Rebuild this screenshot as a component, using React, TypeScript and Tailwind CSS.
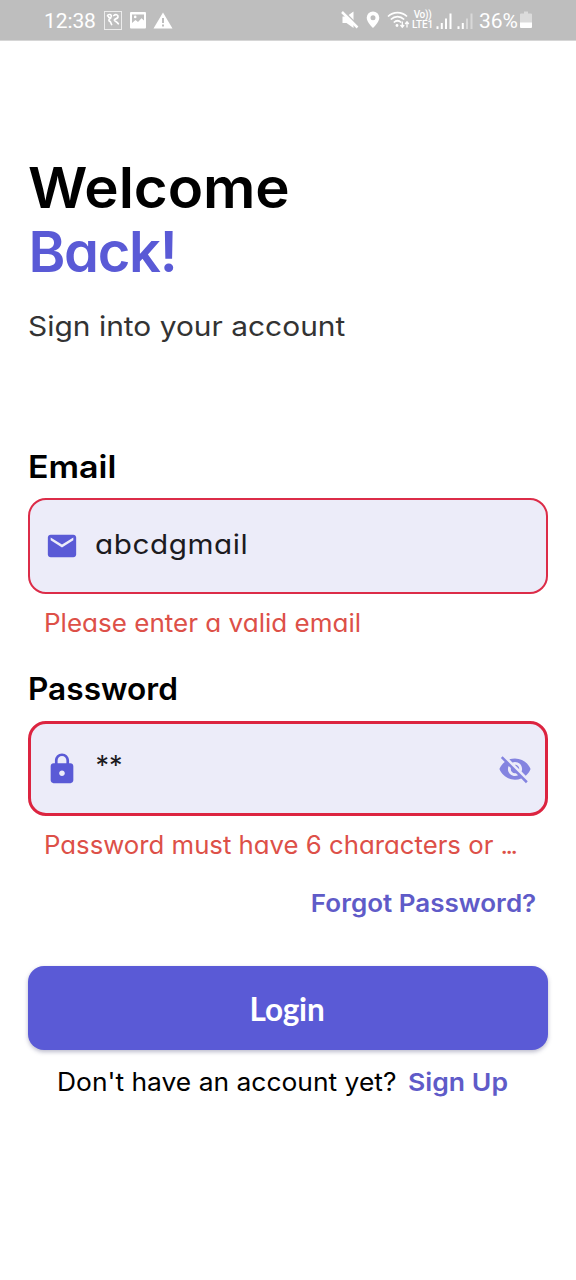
import type { ReactNode } from "react";

function StatusBar() {
  return (
    <header className="flex h-[41px] items-center border-b border-[#d6d6d6] bg-[#bebebe] pl-[44px] pr-[44px] font-['Roboto',sans-serif] text-[21px] leading-10 text-white">
      <span className="w-[60px] pt-[2px] tracking-[-0.100px]">12:38</span>
      <span className="flex h-[19px] w-[18px] items-center justify-center border border-white/70">
        <svg width="14" height="14" viewBox="0 0 14 14" fill="none" stroke="white" strokeWidth="1.700" strokeLinecap="round">
          <path d="M1.500 2.800C2.200.8 5.600 1.200 5.300 3.400 5 5.200 2.400 5 2.400 3.600M4.600 5.200C2.400 6.200 2.300 8 4.300 8.600L5.600 11.500M7.800 2.500C9.600.8 12.400 1.800 12 4 11.600 6 8 5.800 8.400 7.200 8.800 8.400 10.500 7.800 12.300 10.800" />
        </svg>
      </span>
      <svg className="ml-[8px]" width="16" height="17" viewBox="0 0 16 17">
        <rect width="16" height="16.500" rx="1" fill="white" />
        <path d="M2 2.500h12v6L11.500 6.300 8 10 5.500 8 2 11z" fill="#bebebe" />
        <circle cx="5.200" cy="4.900" r="1.300" fill="white" />
      </svg>
      <svg className="ml-[7px]" width="20" height="17" viewBox="0 0 20 17">
        <path d="M10 .5 19.500 16.500H.5z" fill="white" />
        <path d="M9 6h2v5H9zM9 12.500h2v2H9z" fill="#bebebe" />
      </svg>

      <svg className="ml-auto" width="18" height="18" viewBox="0 0 18 18">
        <path d="M1.500 5.500h4l7-5V17l-7-5h-4z" fill="white" />
        <path d="M2.500 0 18 15.500" stroke="#bebebe" strokeWidth="1.600" />
        <path d="M1 1 16.500 16.500" stroke="white" strokeWidth="2.500" />
      </svg>
      <svg className="ml-[7px]" width="14" height="18" viewBox="0 0 14 18">
        <path
          fillRule="evenodd"
          d="M7 .5A6.300 6.300 0 0 0 .7 6.800C.7 11.200 7 17 7 17s6.300-5.800 6.300-10.200A6.300 6.300 0 0 0 7 .5zM7 4.200a2.500 2.500 0 1 1 0 5 2.500 2.500 0 0 1 0-5z"
          fill="white"
        />
      </svg>
      <svg className="ml-[7px]" width="23" height="18" viewBox="0 0 23 18" fill="none" stroke="white" strokeWidth="1.700">
        <path d="M1 5.500C6.500.2 14.500.2 20 5.500M3.800 8.500c4-3.800 9.400-3.800 13.400 0M6.800 11.500c2.200-2.100 5.200-2.100 7.400 0" />
        <circle cx="10" cy="14.500" r="1.400" fill="white" stroke="none" />
        <path d="M15.300 10.500v5.500M13.500 14l1.800 2.300 1.800-2.300M20 16.500v-5.500M18.200 13 20 10.700l1.800 2.300" strokeWidth="1.300" />
      </svg>
      <span className="ml-[2px] flex w-[21px] flex-col items-center text-[10px] font-medium leading-[10px]">
        <span className="tracking-[-0.300px]">Vo))</span>
        <span className="tracking-[-0.200px]">LTE1</span>
      </span>
      <svg className="ml-[3px]" width="17" height="17" viewBox="0 0 17 17" fill="white">
        <path d="M.5 14.300h2V17h-2zM4.800 11h2v6h-2zM9 6.500h2V17H9zM13.500 1.500h2V17h-2z" />
      </svg>
      <svg className="ml-[4px]" width="17" height="17" viewBox="0 0 17 17" fill="white">
        <path d="M.5 14.300h2V17h-2zM4.800 11h2v6h-2z" />
        <path d="M9 6.500h2V17H9zM13.500 1.500h2V17h-2z" opacity="0.4" />
      </svg>
      <span className="ml-[5px] pt-[2px]">36%</span>
      <svg className="ml-[2px]" width="12" height="18" viewBox="0 0 12 18" fill="white">
        <path d="M4 .5h4v2h3q1 0 1 1V12H0V3.500q0-1 1-1h3z" opacity="0.45" />
        <path d="M0 11.500h12V16q0 1-1 1H1q-1 0-1-1z" />
      </svg>
    </header>
  );
}

function MailIcon() {
  return (
    <svg width="34" height="34" viewBox="0 0 24 24" fill="#5a5ad6">
      <path d="M20 4H4c-1.100 0-1.990.9-1.990 2L2 18c0 1.100.9 2 2 2h16c1.100 0 2-.9 2-2V6c0-1.100-.9-2-2-2zm0 4l-8 5-8-5V6l8 5 8-5v2z" />
    </svg>
  );
}

function LockIcon() {
  return (
    <svg width="34" height="34" viewBox="0 0 24 24" fill="#5a5ad6">
      <path d="M18 8h-1V6c0-2.760-2.240-5-5-5S7 3.240 7 6v2H6c-1.100 0-2 .9-2 2v10c0 1.100.9 2 2 2h12c1.100 0 2-.9 2-2V10c0-1.100-.9-2-2-2zm-6 9c-1.100 0-2-.9-2-2s.9-2 2-2 2 .9 2 2-.9 2-2 2zm3.100-9H8.900V6c0-1.710 1.390-3.100 3.100-3.100 1.710 0 3.100 1.390 3.100 3.100v2z" />
    </svg>
  );
}

function EyeOffIcon() {
  return (
    <svg width="34" height="34" viewBox="0 0 24 24" fill="#8484e0">
      <path d="M12 7c2.760 0 5 2.240 5 5 0 .65-.13 1.260-.36 1.830l2.920 2.920c1.510-1.260 2.700-2.890 3.430-4.750-1.730-4.390-6-7.500-11-7.500-1.400 0-2.740.25-3.980.7l2.160 2.160C10.740 7.130 11.350 7 12 7zM2 4.270l2.280 2.280.46.46C3.080 8.300 1.780 10.020 1 12c1.730 4.390 6 7.500 11 7.500 1.550 0 3.030-.3 4.380-.84l.42.42L19.730 22 21 20.730 3.270 3 2 4.270zM7.530 9.800l1.550 1.550c-.05.21-.08.43-.08.65 0 1.660 1.340 3 3 3 .22 0 .44-.03.65-.08l1.550 1.550c-.67.33-1.410.53-2.200.53-2.760 0-5-2.240-5-5 0-.79.2-1.530.53-2.200zm4.310-.78l3.150 3.150.02-.16c0-1.660-1.340-3-3-3l-.17.01z" />
    </svg>
  );
}

function Label({ children, className }: { children: ReactNode; className: string }) {
  return (
    <label className={`block origin-left self-start text-[31px] font-semibold leading-10 text-black ${className}`}>
      {children}
    </label>
  );
}

function FieldError({ children, className }: { children: ReactNode; className: string }) {
  return (
    <p
      className={`ml-[16px] mt-[13px] origin-left self-start whitespace-nowrap text-[25px] leading-8 text-[#dd5048] [font-feature-settings:'cv11'] ${className}`}
    >
      {children}
    </p>
  );
}

export default function App() {
  return (
    <div className="flex h-[1280px] w-[576px] flex-col overflow-hidden bg-white font-['Inter',sans-serif]">
      <StatusBar />
      <main className="flex flex-col px-7">
        <h1 className="mt-[115px] self-start whitespace-nowrap text-[56px] font-semibold leading-[64px] [font-feature-settings:'cv11']">
          <span className="block origin-left scale-x-[1.040] tracking-[-0.100px] text-black">Welcome</span>
          <span className="ml-[0.500px] block tracking-[-1.300px] text-[#5a5ad6]">Back!</span>
        </h1>
        <p className="mt-[22px] origin-left scale-x-[1.088] self-start whitespace-nowrap text-[27.5px] leading-10 text-[#333333]">
          Sign into your account
        </p>

        <Label className="mt-[101px] scale-x-[1.095]">Email</Label>
        <div className="mt-[11px] flex h-[96px] items-center rounded-[18px] border-2 border-[#dc2c48] bg-[#ececf9] pl-[14.500px]">
          <MailIcon />
          <span className="mb-[2px] ml-[16px] origin-left scale-x-[1.100] text-[27px] leading-8 tracking-[0.500px] text-[#1c1b1f] [font-feature-settings:'cv11']">
            abcdgmail
          </span>
        </div>
        <FieldError className="scale-x-[1.041]">Please enter a valid email</FieldError>

        <Label className="mt-[30px] scale-x-[1.020]">Password</Label>
        <div className="mt-[12px] flex h-[95px] items-center rounded-[18px] border-[3.500px] border-[#dc2440] bg-[#ececf9] pl-[13.500px] pr-[13.500px]">
          <LockIcon />
          <span className="mb-[5px] ml-[17px] text-[27px] leading-8 text-[#1c1b1f]">**</span>
          <button className="ml-auto" aria-label="Show password">
            <EyeOffIcon />
          </button>
        </div>
        <FieldError className="scale-x-[1.030]">
          Password must have 6 characters or <span className="tracking-[-2.400px]">...</span>
        </FieldError>

        <a className="mr-[12px] mt-[26px] origin-right scale-x-[1.062] self-end whitespace-nowrap text-[24.5px] font-semibold leading-8 text-[#5f5bc8]">
          Forgot Password?
        </a>

        <button className="mt-[47px] h-[84px] rounded-[16px] bg-[#5a5ad6] pr-[2px] pt-[4px] font-['Lato',sans-serif] text-[31.500px] font-bold tracking-[-0.200px] text-white shadow-[0_2px_4px_rgba(60,60,110,0.35)]">
          Login
        </button>
        <p className="ml-[29px] mt-[16px] flex whitespace-nowrap text-[25px] leading-8 text-black">
          <span className="origin-left scale-x-[1.056]">Don't have an account yet?</span>
          <a className="ml-[29.500px] origin-left scale-x-[1.085] text-[24.5px] font-semibold text-[#5f5bc8]">Sign Up</a>
        </p>
      </main>
    </div>
  );
}
